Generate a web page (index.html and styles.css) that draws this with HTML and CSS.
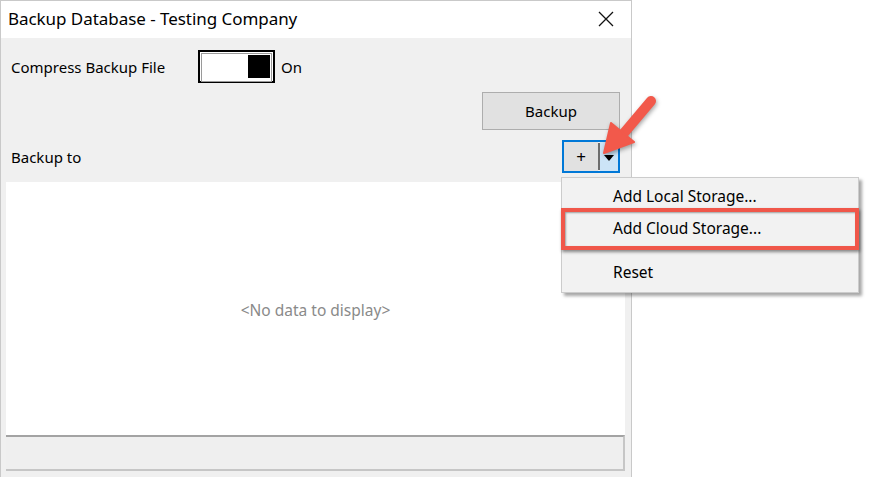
FILE: index.html
```html
<!DOCTYPE html>
<html>
<head>
<meta charset="utf-8">
<link rel="stylesheet" href="styles.css">
</head>
<body>
<div class="window">
  <div class="titlebar">
    <span class="title">Backup Database - Testing Company</span>
    <svg class="close" width="16" height="16" viewBox="0 0 16 16"><path d="M1 1L15 15M15 1L1 15" stroke="#111" stroke-width="1.3" fill="none"/></svg>
  </div>
  <div class="content">
    <div class="row compress">
      <span class="label">Compress Backup File</span>
      <div class="toggle"><div class="toggle-inner"><div class="knob"></div></div></div>
      <span class="on">On</span>
    </div>
    <div class="row actions">
      <div class="btn">Backup</div>
    </div>
    <div class="row backup-to">
      <span class="label">Backup to</span>
      <div class="split">
        <div class="split-main">+</div>
        <div class="split-sep"></div>
        <div class="split-drop"><svg width="10" height="6" viewBox="0 0 10 6"><path d="M0 0H10L5 6Z" fill="#000"/></svg></div>
      </div>
    </div>
    <div class="grid">
      <div class="empty">&lt;No data to display&gt;</div>
      <div class="status"></div>
    </div>
  </div>
</div>

<div class="menu">
  <div class="item">Add Local Storage...</div>
  <div class="item">Add Cloud Storage...</div>
  <div class="sep"></div>
  <div class="item">Reset</div>
</div>
<div class="highlight"></div>
<svg class="arrow" width="80" height="80" viewBox="590 90 80 80">
  <path d="M651 101L624 133" stroke="#f2594b" stroke-width="10" stroke-linecap="round" fill="none"/>
  <path d="M604 153L611 123L634 142Z" fill="#f2594b" stroke="#f2594b" stroke-width="2" stroke-linejoin="round"/>
</svg>
</body>
</html>
```

FILE: styles.css
```css
html, body {
  margin: 0;
  padding: 0;
  background: #ffffff;
}
body {
  width: 869px;
  height: 477px;
  overflow: hidden;
  position: relative;
  font-family: "Noto Sans", "Open Sans", sans-serif;
  color: #000;
}
.window {
  width: 630px;
  height: 490px;
  border: 1px solid #c9c9c9;
  background: #f0f0f0;
  display: flex;
  flex-direction: column;
}
.titlebar {
  height: 37px;
  background: #ffffff;
  display: flex;
  align-items: center;
  justify-content: space-between;
  padding: 0 17px 0 7px;
}
.title {
  font-size: 17px;
  letter-spacing: -0.05px;
  margin-top: -2px;
}
.close {
  margin-top: -1px;
}
.content {
  display: flex;
  flex-direction: column;
  padding: 0 6px 0 5px;
}
.row {
  display: flex;
  align-items: center;
}
.label {
  font-size: 15px;
  padding-left: 5px;
}
.compress {
  margin-top: 13px;
  height: 31px;
}
.compress .label {
  width: 187px;
}
.toggle {
  width: 71px;
  height: 27px;
  border: 2px solid #000;
  background: #fff;
  padding: 1px;
  box-sizing: content-box;
}
.toggle-inner {
  height: 25px;
  border: 1px solid #9a9a9a;
  display: flex;
  justify-content: flex-end;
  padding: 1px;
}
.knob {
  width: 22px;
  height: 23px;
  background: #000;
}
.on {
  font-size: 15px;
  margin-left: 6px;
}
.actions {
  justify-content: flex-end;
  margin-top: 10px;
  padding-right: 5px;
}
.btn {
  width: 136px;
  height: 36px;
  background: #e1e1e1;
  border: 1px solid #adadad;
  display: flex;
  align-items: center;
  justify-content: center;
  font-size: 15px;
}
.backup-to {
  margin-top: 10px;
  justify-content: space-between;
  padding-right: 5px;
  height: 33px;
}
.split {
  width: 54px;
  height: 29px;
  border: 2px solid #0078d7;
  display: flex;
}
.split-main {
  width: 34px;
  background: #e1e1e1;
  display: flex;
  align-items: center;
  justify-content: center;
  font-size: 17px;
}
.split-sep {
  width: 2px;
  background: #6d6d6d;
  margin: 1px 0;
}
.split-drop {
  flex: 1;
  background: #cce4f7;
  display: flex;
  align-items: center;
  justify-content: center;
  padding-top: 2px;
}
.grid {
  margin-top: 9px;
  display: flex;
  flex-direction: column;
}
.empty {
  height: 253px;
  background: #fff;
  display: flex;
  align-items: center;
  justify-content: center;
  color: #8a8a8a;
  font-size: 15.5px;
  padding-top: 2px;
  box-sizing: border-box;
}
.status {
  height: 32px;
  border-top: 2px solid #a3a3a3;
  border-bottom: 2px solid #c6c6c6;
  border-right: 2px solid #c6c6c6;
  background: #efefef;
}
.menu {
  position: absolute;
  left: 561px;
  top: 177px;
  width: 298px;
  height: 116px;
  background: #f2f2f2;
  border: 1px solid #cccccc;
  box-shadow: 3px 3px 3px rgba(0,0,0,0.35);
  padding-top: 3px;
  box-sizing: border-box;
}
.item {
  height: 32px;
  line-height: 31px;
  padding-left: 51px;
  font-size: 15.5px;
}
.sep {
  height: 1px;
  background: #cfcfcf;
  margin: 4px 4px 7px 40px;
}
.highlight {
  position: absolute;
  left: 561px;
  top: 208px;
  width: 290px;
  height: 34px;
  border: 4px solid #f0574a;
  box-shadow: 1px 2px 3px rgba(0,0,0,0.45), inset 1px 1px 2px rgba(0,0,0,0.35);
}
.arrow {
  position: absolute;
  left: 590px;
  top: 90px;
  filter: drop-shadow(1px 2px 2px rgba(0,0,0,0.35));
}
```
